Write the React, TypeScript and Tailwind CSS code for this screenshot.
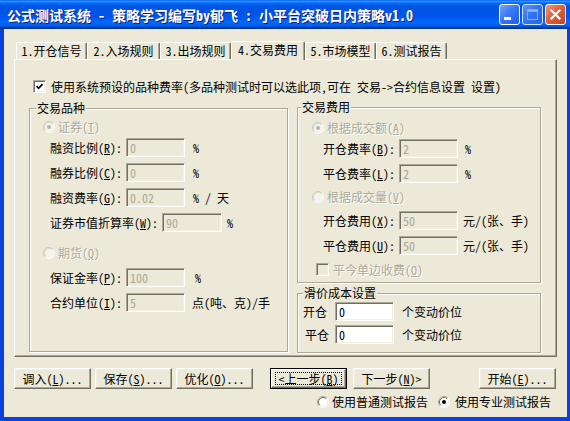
import React from "react";

const dim = "text-[#aca899] [text-shadow:1px_1px_0_#fff]";
const sunken =
  "border border-t-[#aca899] border-l-[#aca899] border-b-white border-r-white shadow-[inset_1px_1px_0_#716f64,inset_-1px_-1px_0_#f1efe2]";
const raised =
  "border border-t-white border-l-white border-b-[#716f64] border-r-[#716f64] shadow-[inset_-1px_-1px_0_#aca899,inset_1px_1px_0_#f1efe2]";

function Radio({ on, off }: { on?: boolean; off?: boolean }) {
  return (
    <svg width="12" height="12" viewBox="0 0 12 12" className="shrink-0">
      <circle cx="6" cy="6" r="5" fill={off ? "#f4f3ee" : "#fff"} />
      <path d="M2.11 9.89A5.5 5.5 0 0 1 9.89 2.11" fill="none" stroke={off ? "#cac8bb" : "#aca899"} />
      <path d="M9.89 2.11A5.5 5.5 0 0 1 2.11 9.89" fill="none" stroke="#fff" />
      <path d="M2.82 9.18A4.5 4.5 0 0 1 9.18 2.82" fill="none" stroke={off ? "#dcd9cc" : "#716f64"} />
      <path d="M9.18 2.82A4.5 4.5 0 0 1 2.82 9.18" fill="none" stroke={off ? "#f4f3ee" : "#f1efe2"} />
      {on && <circle cx="6" cy="6" r="2" fill={off ? "#b5b3a6" : "#000"} />}
    </svg>
  );
}

function Check({ on, off }: { on?: boolean; off?: boolean }) {
  return (
    <span
      className={`w-[13px] h-[13px] shrink-0 flex items-center justify-center ${sunken} ${
        off ? "bg-[#ece9d8]" : "bg-white"
      }`}
    >
      {on && (
        <svg width="7" height="7" viewBox="0 0 7 7">
          <path d="M0.6 3.2 L2.6 5.3 L6.5 1.2" fill="none" stroke="#000" strokeWidth="1.7" />
        </svg>
      )}
    </span>
  );
}

function Field({ v, w = "w-[59px]", on }: { v: string; w?: string; on?: boolean }) {
  return (
    <span
      className={`${w} h-[19px] shrink-0 flex items-center pl-[3px] ${sunken} ${
        on ? "bg-white text-black" : "bg-[#ece9d8] text-[#aca899]"
      }`}
    >
      {v}
    </span>
  );
}

function Group({
  title,
  className,
  tml,
  children,
}: {
  title: string;
  className: string;
  tml: string;
  children: React.ReactNode;
}) {
  return (
    <div
      className={`flex flex-col border border-[#aca899] shadow-[inset_1px_1px_0_#fff,1px_1px_0_#fff] ${className}`}
    >
      <span className={`self-start -mt-[8px] ${tml} px-[1px] h-[14px] leading-[14px] bg-[#ece9d8]`}>
        {title}
      </span>
      {children}
    </div>
  );
}

function Tab({ label, w, sel }: { label: string; w: string; sel?: boolean }) {
  return (
    <div
      className={`${w} ${
        sel ? "h-[19px] -mb-[1px] z-10 pb-[3px]" : "h-[17px] pb-[1px]"
      } shrink-0 flex items-center justify-center bg-[#ece9d8] border-t border-l border-r border-t-white border-l-white border-r-[#716f64] shadow-[inset_-1px_0_0_#aca899] rounded-t-[2px]`}
    >
      {label}
    </div>
  );
}

function Btn({ children, def }: { children: React.ReactNode; def?: boolean }) {
  if (def) {
    return (
      <div className="w-[77px] h-[21px] shrink-0 border border-black">
        <div className={`w-full h-full flex items-center justify-center ${raised}`}>
          <span className="border border-dotted border-black px-[2px] h-[13px] flex items-center">
            {children}
          </span>
        </div>
      </div>
    );
  }
  return (
    <div className={`w-[77px] h-[21px] shrink-0 flex items-center justify-center ${raised}`}>
      {children}
    </div>
  );
}

function CapBtn({ kind }: { kind: "min" | "max" | "close" }) {
  const bg =
    kind === "close"
      ? "bg-[linear-gradient(135deg,#f19a7c_0%,#e4643f_40%,#c6421c_100%)]"
      : kind === "max"
      ? "bg-[linear-gradient(135deg,#7aa6fb_0%,#3f7bf0_45%,#2d66e6_100%)] opacity-80"
      : "bg-[linear-gradient(135deg,#78a5fb_0%,#3a78f4_45%,#1e5ce8_100%)]";
  return (
    <div className={`w-[21px] h-[21px] rounded-[3px] border border-white flex items-center justify-center ${bg}`}>
      <svg width="19" height="19" viewBox="0 0 19 19">
        {kind === "min" && <rect x="4" y="12" width="7" height="3" fill="#fff" />}
        {kind === "max" && (
          <g fill="none" stroke="#a9c2f7">
            <rect x="4.5" y="4.5" width="10" height="10" />
            <line x1="4.5" y1="6" x2="14.5" y2="6" strokeWidth="2" />
          </g>
        )}
        {kind === "close" && (
          <g stroke="#fff" strokeWidth="2.2" strokeLinecap="square">
            <line x1="5.5" y1="5.5" x2="13.5" y2="13.5" />
            <line x1="13.5" y1="5.5" x2="5.5" y2="13.5" />
          </g>
        )}
      </svg>
    </div>
  );
}

export default function App() {
  return (
    <div className="w-[570px] h-[421px] flex flex-col bg-[#0a41dc] text-[12px] leading-[14px] text-black font-['Noto_Sans_Mono_CJK_SC','Noto_Sans_CJK_SC',sans-serif]">
      {/* title bar */}
      <div className="h-[29px] shrink-0 flex items-center pl-[7px] pr-[4px] gap-[2px] bg-[linear-gradient(to_bottom,#0058ee_0%,#3593ff_4%,#288eff_6%,#127dff_8%,#036ffc_10%,#0262ee_14%,#0057e5_20%,#0054e3_24%,#0055eb_56%,#005bf5_66%,#026afe_76%,#0062ef_86%,#0052d6_92%,#0040ab_94%,#003092_100%)]">
        <span className="flex-1 whitespace-nowrap text-white font-bold text-[14px] leading-[16px] [text-shadow:1px_1px_0_#0f1f7a]">
          公式测试系统 - 策略学习编写by郁飞 : 小平台突破日内策略v1.0
        </span>
        <CapBtn kind="min" />
        <CapBtn kind="max" />
        <CapBtn kind="close" />
      </div>

      {/* client */}
      <div className="flex-1 ml-[4px] mr-[3px] mb-[4px] bg-[#ece9d8] flex flex-col pt-[12px] px-[10px]">
        <div className="h-[18px] flex items-end pl-[2px]">
          <Tab w="w-[71px]" label="1.开仓信号" />
          <Tab w="w-[73px]" label="2.入场规则" />
          <Tab w="w-[71px]" label="3.出场规则" />
          <Tab w="w-[74px]" label="4.交易费用" sel />
          <Tab w="w-[71px]" label="5.市场模型" />
          <Tab w="w-[71px]" label="6.测试报告" />
        </div>

        <div className="h-[298px] flex flex-col border-t border-l border-r border-b border-t-white border-l-white border-r-[#716f64] border-b-[#716f64] shadow-[inset_-1px_-1px_0_#aca899] pt-[20px] pl-[14px]">
          <div className="h-[13px] flex items-center gap-[5px] ml-[4px] whitespace-nowrap">
            <Check on />
            <span>{"使用系统预设的品种费率(多品种测试时可以选此项,可在 交易->合约信息设置 设置)"}</span>
          </div>

          <div className="flex items-start gap-[9px] mt-[14px]">
            {/* left group */}
            <Group title="交易品种" className="w-[259px] h-[244px] mt-[1px]" tml="ml-[6px]">
              <div className={`h-[14px] mt-[5px] pl-[13px] flex items-center gap-[3px] ${dim}`}>
                <Radio on off />
                <span>证券(<u>T</u>)</span>
              </div>
              <div className="h-[19px] mt-[4px] pl-[20px] flex items-center">
                <span className="w-[76px] shrink-0">融资比例(<u>R</u>):</span>
                <Field v="0" />
                <span className="ml-[8px]">%</span>
              </div>
              <div className="h-[19px] mt-[6px] pl-[20px] flex items-center">
                <span className="w-[76px] shrink-0">融券比例(<u>C</u>):</span>
                <Field v="0" />
                <span className="ml-[8px]">%</span>
              </div>
              <div className="h-[19px] mt-[6px] pl-[20px] flex items-center">
                <span className="w-[76px] shrink-0">融资费率(<u>G</u>):</span>
                <Field v="0.02" />
                <span className="ml-[8px] whitespace-pre">% / 天</span>
              </div>
              <div className="h-[19px] mt-[6px] pl-[20px] flex items-center">
                <span className="w-[112px] shrink-0">证券市值折算率(<u>W</u>):</span>
                <Field v="90" w="w-[60px]" />
                <span className="ml-[5px]">%</span>
              </div>
              <div className={`h-[14px] mt-[14px] pl-[13px] flex items-center gap-[3px] ${dim}`}>
                <Radio off />
                <span>期货(<u>Q</u>)</span>
              </div>
              <div className="h-[19px] mt-[8px] pl-[20px] flex items-center">
                <span className="w-[76px] shrink-0">保证金率(<u>P</u>):</span>
                <Field v="100" />
                <span className="ml-[10px]">%</span>
              </div>
              <div className="h-[19px] mt-[6px] pl-[20px] flex items-center">
                <span className="w-[76px] shrink-0">合约单位(<u>I</u>):</span>
                <Field v="5" />
                <span className="ml-[7px] whitespace-nowrap">点(吨、克)/手</span>
              </div>
            </Group>

            {/* right column */}
            <div className="w-[244px] flex flex-col">
              <Group title="交易费用" className="h-[176px]" tml="ml-[3px]">
                <div className={`h-[14px] mt-[7px] pl-[14px] flex items-center gap-[3px] ${dim}`}>
                  <Radio on off />
                  <span>根据成交额(<u>A</u>)</span>
                </div>
                <div className="h-[19px] mt-[4px] pl-[25px] flex items-center">
                  <span className="w-[76px] shrink-0">开仓费率(<u>B</u>):</span>
                  <Field v="2" />
                  <span className="ml-[7px]">%</span>
                </div>
                <div className="h-[19px] mt-[6px] pl-[25px] flex items-center">
                  <span className="w-[76px] shrink-0">平仓费率(<u>L</u>):</span>
                  <Field v="2" />
                  <span className="ml-[7px]">%</span>
                </div>
                <div className={`h-[14px] mt-[7px] pl-[14px] flex items-center gap-[3px] ${dim}`}>
                  <Radio off />
                  <span>根据成交量(<u>V</u>)</span>
                </div>
                <div className="h-[19px] mt-[7px] pl-[25px] flex items-center">
                  <span className="w-[76px] shrink-0">开仓费用(<u>X</u>):</span>
                  <Field v="50" />
                  <span className="ml-[5px] whitespace-nowrap">元/(张、手)</span>
                </div>
                <div className="h-[19px] mt-[6px] pl-[25px] flex items-center">
                  <span className="w-[76px] shrink-0">平仓费用(<u>U</u>):</span>
                  <Field v="50" />
                  <span className="ml-[5px] whitespace-nowrap">元/(张、手)</span>
                </div>
                <div className={`h-[13px] mt-[8px] pl-[18px] flex items-center gap-[4px] ${dim}`}>
                  <Check off />
                  <span>平今单边收费(<u>O</u>)</span>
                </div>
              </Group>

              <Group title="滑价成本设置" className="h-[60px] mt-[10px]" tml="ml-[5px]">
                <div className="h-[19px] mt-[2px] pl-[5px] flex items-center">
                  <span className="w-[32px] shrink-0">开仓</span>
                  <Field v="0" on />
                  <span className="ml-[8px]">个变动价位</span>
                </div>
                <div className="h-[19px] mt-[4px] pl-[5px] flex items-center">
                  <span className="w-[32px] shrink-0 pl-[2px]">平仓</span>
                  <Field v="0" on />
                  <span className="ml-[8px]">个变动价位</span>
                </div>
              </Group>
            </div>
          </div>
        </div>

        {/* buttons */}
        <div className="h-[21px] mt-[11px] flex items-center">
          <Btn>调入(<u>L</u>)...</Btn>
          <div className="ml-[4px]"><Btn>保存(<u>S</u>)...</Btn></div>
          <div className="ml-[4px]"><Btn>优化(<u>O</u>)...</Btn></div>
          <div className="ml-[17px]"><Btn def>&lt;上一步(<u>B</u>)</Btn></div>
          <div className="ml-[6px]"><Btn>下一步(<u>N</u>)&gt;</Btn></div>
          <div className="ml-[49px]"><Btn>开始(<u>E</u>)...</Btn></div>
        </div>

        <div className="h-[14px] mt-[6px] flex items-center ml-[303px] whitespace-nowrap">
          <Radio />
          <span className="ml-[3px]">使用普通测试报告</span>
          <span className="ml-[10px] flex"><Radio on /></span>
          <span className="ml-[5px]">使用专业测试报告</span>
        </div>
      </div>
    </div>
  );
}
